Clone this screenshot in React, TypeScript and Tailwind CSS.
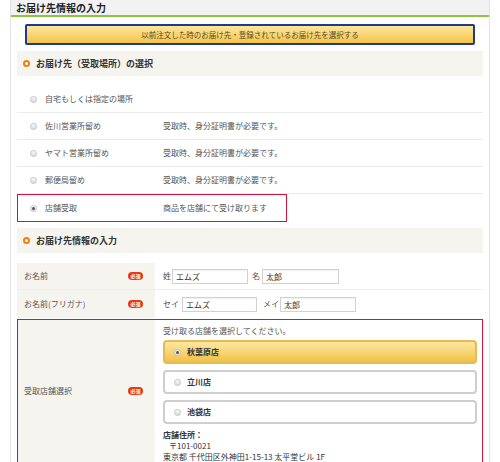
import React from 'react';

const options = [
  { label: '自宅もしくは指定の場所', note: '' },
  { label: '佐川営業所留め', note: '受取時、身分証明書が必要です。' },
  { label: 'ヤマト営業所留め', note: '受取時、身分証明書が必要です。' },
  { label: '郵便局留め', note: '受取時、身分証明書が必要です。' },
];

const stores = ['秋葉原店', '立川店', '池袋店'];

function Radio({ checked = false }: { checked?: boolean }) {
  return (
    <span className="w-[7px] h-[7px] rounded-full border border-[#c4c4c4] bg-gradient-to-b from-[#fafafa] to-[#dcdcdc] flex items-center justify-center shrink-0">
      {checked && <span className="w-[3px] h-[3px] rounded-full bg-[#555]" />}
    </span>
  );
}

function SectionTitle({ children }: { children: React.ReactNode }) {
  return (
    <div className="h-[25px] bg-[#f5f4ef] flex items-center pl-[6px] gap-[6px] text-[9px] font-bold text-[#333]">
      <span className="w-[7px] h-[7px] rounded-full border-2 border-[#f0820a] bg-white" />
      {children}
    </div>
  );
}

function Required() {
  return (
    <span className="w-[15px] h-[8px] rounded-full bg-[#e63a12] text-white text-[5px] leading-[8px] text-center font-bold">必須</span>
  );
}

function Field({ w, value }: { w: string; value: string }) {
  return (
    <span className={`${w} h-[15px] border border-[#d2d2d2] shadow-[inset_0_1px_1px_rgba(0,0,0,0.06)] bg-white pl-[3px] leading-[13px] text-[8px] text-[#333]`}>
      {value}
    </span>
  );
}

export default function App() {
  return (
    <div className="w-[500px] h-[462px] bg-white overflow-hidden text-[#555] font-['Noto_Sans_CJK_JP','Noto_Sans',sans-serif]">
      <div className="ml-[10px] w-[480px] h-full border-x border-[#e2e2e2]">
        <div className="h-[17px] bg-[#f2f2f2] border-b-2 border-[#8cc43c] flex items-center pl-[5px] text-[10px] font-bold text-[#222]">
          お届け先情報の入力
        </div>

        <div className="px-[6px]">
          <button className="mt-[7px] mx-[8px] w-[450px] h-[21px] rounded-[2px] border-2 border-[#1f3a8c] bg-gradient-to-b from-[#fde79c] to-[#f4c443] text-[7.5px] text-[#5a4a20] flex items-center justify-center">
            以前注文した時のお届け先・登録されているお届け先を選択する
          </button>

          <div className="mt-[6px]">
            <SectionTitle>お届け先（受取場所）の選択</SectionTitle>
          </div>

          <div className="mt-[10px]">
            {options.map(o => (
              <div key={o.label} className="h-[27px] border-b border-[#ececec] flex items-center text-[8px]">
                <span className="w-[28px] flex justify-center pl-[4px]"><Radio /></span>
                <span className="w-[118px]">{o.label}</span>
                <span>{o.note}</span>
              </div>
            ))}
            <div className="w-[270px] h-[28px] border-[1.5px] border-[#d3123f] flex items-center text-[8px]">
              <span className="w-[27px] flex justify-center pl-[3px]"><Radio checked /></span>
              <span className="w-[118px]">店舗受取</span>
              <span>商品を店舗にて受け取ります</span>
            </div>
          </div>

          <div className="mt-[6px]">
            <SectionTitle>お届け先情報の入力</SectionTitle>
          </div>

          <div className="mt-[10px] text-[8px]">
            <div className="h-[27px] flex border-b border-[#eeeeee]">
              <div className="w-[138px] bg-[#f5f4ef] flex items-center justify-between pl-[7px] pr-[12px]">
                <span>お名前</span>
                <Required />
              </div>
              <div className="flex items-center pl-[8px]">
                <span className="w-[9px]">姓</span>
                <Field w="w-[76px]" value="エムズ" />
                <span className="ml-[4px] w-[10px]">名</span>
                <Field w="w-[77px]" value="太郎" />
              </div>
            </div>
            <div className="h-[28px] flex">
              <div className="w-[138px] bg-[#f5f4ef] flex items-center justify-between pl-[7px] pr-[12px]">
                <span>お名前(フリガナ)</span>
                <Required />
              </div>
              <div className="flex items-center pl-[8px]">
                <span className="w-[19px]">セイ</span>
                <Field w="w-[75px]" value="エムズ" />
                <span className="ml-[6px] w-[17px]">メイ</span>
                <Field w="w-[76px]" value="太郎" />
              </div>
            </div>
          </div>

          <div className="mt-[1px] h-[144px] border-[1.5px] border-[#d3123f] flex text-[8px]">
            <div className="w-[137px] bg-[#f5f4ef] flex items-center justify-between pl-[6px] pr-[12px]">
              <span>受取店舗選択</span>
              <Required />
            </div>
            <div className="flex-1 pl-[8px] pr-[5px] pt-[5px]">
              <div className="leading-[12px]">受け取る店舗を選択してください。</div>
              <div className="mt-[3px] flex flex-col gap-[6px]">
                {stores.map((s, i) => (
                  <div
                    key={s}
                    className={`h-[24px] rounded-[4px] border-2 flex items-center pl-[9px] gap-[6px] font-bold text-[#333] ${
                      i === 0
                        ? 'border-[#e3bd52] bg-gradient-to-b from-[#fde7a0] to-[#f2c141]'
                        : 'border-[#cfcfcf] bg-white'
                    }`}
                  >
                    <Radio checked={i === 0} />
                    {s}
                  </div>
                ))}
              </div>
              <div className="mt-[5px] leading-[11px] text-[#333]">
                <div className="font-bold">店舗住所：</div>
                <div className="pl-[6px]">〒101-0021</div>
                <div>東京都 千代田区外神田1-15-13 太平堂ビル 1F</div>
              </div>
            </div>
          </div>
        </div>
      </div>
    </div>
  );
}
